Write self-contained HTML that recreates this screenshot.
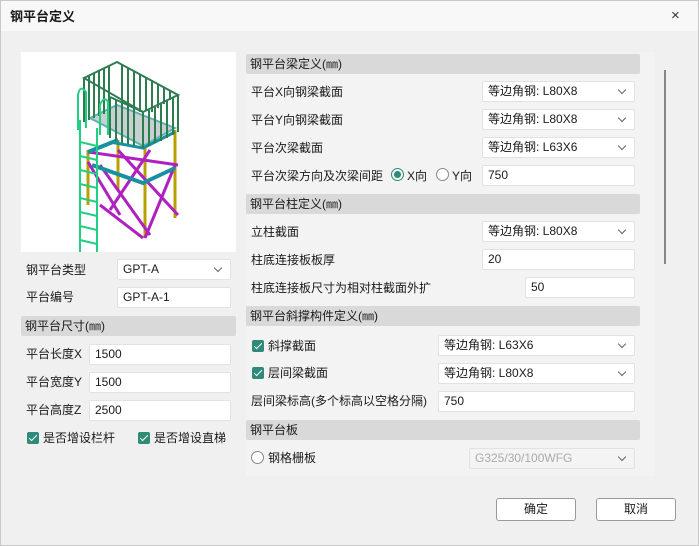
<!DOCTYPE html>
<html><head><meta charset="utf-8"><style>
*{margin:0;padding:0;box-sizing:border-box}
body{width:699px;height:546px;background:#f0f0f0;font-family:"Liberation Sans","Noto Sans CJK SC",sans-serif;font-size:12px;color:#1a1a1a;position:relative;overflow:hidden}
.a{position:absolute}
.t{position:absolute;line-height:16px;white-space:nowrap}
.in{position:absolute;background:#fff;border:1px solid #e2e2e2;border-radius:2px;height:21px;line-height:19px;padding-left:5px;font-size:12px}
.cb:after{content:"";position:absolute;right:9px;top:5px;width:5px;height:5px;border-right:1px solid #666;border-bottom:1px solid #666;transform:rotate(45deg)}
.hd{position:absolute;background:#d9d9d9;height:20px;line-height:20px;padding-left:4px;border-radius:2px}
.ck{position:absolute;width:12px;height:12px;background:#2f8a77;border-radius:2px}
.ck:after{content:"";position:absolute;left:4px;top:1px;width:3px;height:7px;border-right:1.5px solid #fff;border-bottom:1.5px solid #fff;transform:rotate(45deg)}
.btn{position:absolute;background:#fff;border:1px solid #999;border-radius:3px;height:23px;line-height:21px;text-align:center;width:80px}
</style></head><body>
<div class="a" style="left:0;top:0;width:699px;height:31px;background:#f8f8f8;border-top:1px solid #ccc"></div>
<div class="t" style="left:10px;top:9px;font-weight:bold;font-size:13px">钢平台定义</div>
<div class="t" style="left:671px;top:8px;font-size:15px;color:#333">×</div>
<div class="a" style="left:0;top:0;width:699px;height:546px;border:1px solid #c8c8c8;pointer-events:none"></div>

<div class="a" style="left:21px;top:52px;width:215px;height:200px;background:#fff">
<svg width="215" height="200" viewBox="21 52 215 200">
<path d="M90 118 L117 105 L175 128 L143 146 Z" fill="#c8d0d2" stroke="#60b0b8" stroke-width="2"/>
<g stroke-width="3" fill="none">
<path d="M88 150 L88 205 M118 140 L118 190 M175 130 L175 218 M145 148 L145 238" stroke="#b8a000"/>
<path d="M88 152 L178 165 M100 205 L143 238 M100 165 L150 235 M175 165 L145 238 M118 150 L178 215 M150 150 L110 210 M88 162 L120 215" stroke="#b020c0"/>
<path d="M88 152 L118 140 M92 165 L143 183 L175 168" stroke="#1890a0" stroke-width="4"/>
<path d="M110 142 L143 148 L175 132" stroke="#1890a0" stroke-width="3"/>
</g>
<g stroke="#2e7d50" stroke-width="2" fill="none">
<path d="M84 78 L117 62 L178 95 L143 112 Z M84 78 L84 122 M143 112 L143 148 M178 95 L178 132 M110 97 L110 138 M110 97 L143 112"/>
<path d="M89 76 L89 120 M94 73 L94 118 M99 71 L99 116 M104 69 L104 114 M109 66 L109 112 M122 65 L122 105 M128 68 L128 108 M134 71 L134 110 M140 74 L140 112 M146 77 L146 110 M152 80 L152 112 M158 84 L158 108 M164 87 L164 104 M170 90 L170 100 M116 100 L116 141 M122 103 L122 143 M128 105 L128 144 M134 108 L134 146 M149 110 L149 146 M155 107 L155 143 M161 104 L161 141 M167 101 L167 138 M173 98 L173 135"/>
</g>
<g stroke="#20d080" stroke-width="2" fill="none">
<path d="M80 120 L80 270 M97 128 L97 278 M78 130 L78 95 Q80 84 86 92 L86 128 M100 135 L100 105 Q104 95 108 102 L108 135"/>
<path d="M80 142 L97 146 M80 156 L97 160 M80 170 L97 174 M80 184 L97 188 M80 198 L97 202 M80 212 L97 216 M80 226 L97 230 M80 240 L97 244"/>
</g>
</svg></div>

<div class="t" style="left:26px;top:262px">钢平台类型</div>
<div class="in cb" style="left:117px;top:259px;width:114px">GPT-A</div>
<div class="t" style="left:26px;top:289px">平台编号</div>
<div class="in" style="left:117px;top:287px;width:114px">GPT-A-1</div>
<div class="hd" style="left:21px;top:316px;width:215px">钢平台尺寸(㎜)</div>
<div class="t" style="left:26px;top:346px">平台长度X</div>
<div class="in" style="left:89px;top:344px;width:142px">1500</div>
<div class="t" style="left:26px;top:374px">平台宽度Y</div>
<div class="in" style="left:89px;top:372px;width:142px">1500</div>
<div class="t" style="left:26px;top:402px">平台高度Z</div>
<div class="in" style="left:89px;top:400px;width:142px">2500</div>
<div class="ck" style="left:27px;top:432px"></div><div class="t" style="left:43px;top:430px">是否增设栏杆</div>
<div class="ck" style="left:138px;top:432px"></div><div class="t" style="left:154px;top:430px">是否增设直梯</div>

<div class="a" style="left:246px;top:52px;width:409px;height:424px;background:#f3f3f3"></div>
<div class="a" style="left:664px;top:70px;width:2px;height:194px;background:#888"></div>

<div class="hd" style="left:246px;top:54px;width:394px">钢平台梁定义(㎜)</div>
<div class="t" style="left:251px;top:84px">平台X向钢梁截面</div>
<div class="in cb" style="left:482px;top:81px;width:153px">等边角钢: L80X8</div>
<div class="t" style="left:251px;top:112px">平台Y向钢梁截面</div>
<div class="in cb" style="left:482px;top:109px;width:153px">等边角钢: L80X8</div>
<div class="t" style="left:251px;top:140px">平台次梁截面</div>
<div class="in cb" style="left:482px;top:137px;width:153px">等边角钢: L63X6</div>
<div class="t" style="left:251px;top:168px">平台次梁方向及次梁间距</div>
<div class="a" style="left:391px;top:168px;width:13px;height:13px;border:1px solid #2f8a77;border-radius:50%"><div class="a" style="left:2px;top:2px;width:7px;height:7px;border-radius:50%;background:#2f8a77"></div></div>
<div class="t" style="left:407px;top:168px">X向</div>
<div class="a" style="left:436px;top:168px;width:13px;height:13px;border:1px solid #888;border-radius:50%;background:#fff"></div>
<div class="t" style="left:452px;top:168px">Y向</div>
<div class="in" style="left:482px;top:165px;width:153px">750</div>

<div class="hd" style="left:246px;top:194px;width:394px">钢平台柱定义(㎜)</div>
<div class="t" style="left:251px;top:224px">立柱截面</div>
<div class="in cb" style="left:482px;top:221px;width:153px">等边角钢: L80X8</div>
<div class="t" style="left:251px;top:252px">柱底连接板板厚</div>
<div class="in" style="left:482px;top:249px;width:153px">20</div>
<div class="t" style="left:251px;top:280px">柱底连接板尺寸为相对柱截面外扩</div>
<div class="in" style="left:525px;top:277px;width:110px">50</div>

<div class="hd" style="left:246px;top:306px;width:394px">钢平台斜撑构件定义(㎜)</div>
<div class="ck" style="left:252px;top:340px"></div><div class="t" style="left:268px;top:338px">斜撑截面</div>
<div class="in cb" style="left:438px;top:335px;width:197px">等边角钢: L63X6</div>
<div class="ck" style="left:252px;top:367px"></div><div class="t" style="left:268px;top:365px">层间梁截面</div>
<div class="in cb" style="left:438px;top:363px;width:197px">等边角钢: L80X8</div>
<div class="t" style="left:251px;top:393px">层间梁标高(多个标高以空格分隔)</div>
<div class="in" style="left:438px;top:391px;width:197px">750</div>

<div class="hd" style="left:246px;top:420px;width:394px">钢平台板</div>
<div class="a" style="left:251px;top:451px;width:13px;height:13px;border:1px solid #888;border-radius:50%;background:#fff"></div>
<div class="t" style="left:268px;top:450px">钢格栅板</div>
<div class="in cb" style="left:469px;top:448px;width:166px;background:#f4f4f4;color:#aaa">G325/30/100WFG</div>

<div class="btn" style="left:496px;top:498px">确定</div>
<div class="btn" style="left:596px;top:498px">取消</div>
</body></html>
